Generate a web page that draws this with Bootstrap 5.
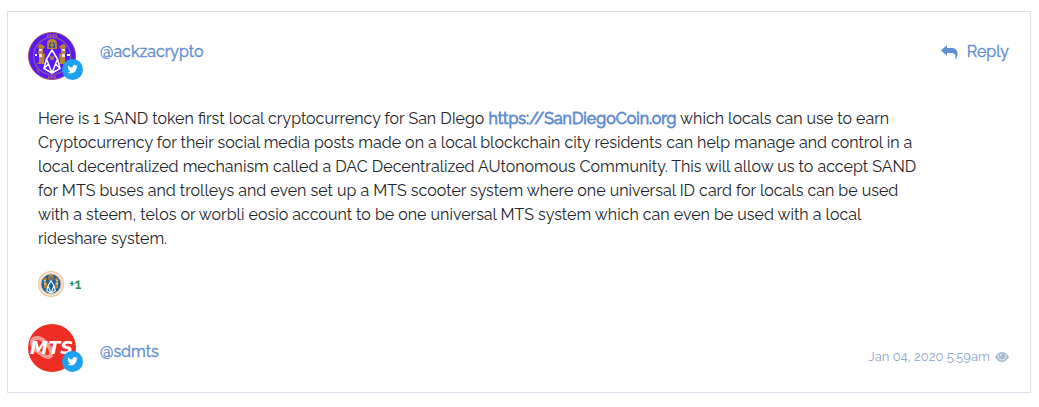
<!DOCTYPE html>
<html lang="en">
<head>
<meta charset="utf-8">
<meta name="viewport" content="width=device-width, initial-scale=1">
<title>Tip from @ackzacrypto</title>
<link href="https://cdn.jsdelivr.net/npm/bootstrap@5.3.0/dist/css/bootstrap.min.css" rel="stylesheet">
<style>
  body { font-family: Raleway, Lato, "Liberation Sans", sans-serif; font-size: 16px; line-height: 24px; color: #212529; }
  .page { padding: 11px 8px 14px 7px; }
  .tip { border: 1px solid #dae0ec; border-radius: 0; padding: 20px; }
  .tip a, .reply { color: #5f8dd3; text-decoration: none; font-weight: 400; -webkit-text-stroke: 0.4px #5f8dd3; }
  .tip a:hover, .reply:hover { text-decoration: underline; }
  .user { gap: 24px; }
  .avatar { width: 48px; height: 48px; }
  .avatar svg { display: block; }
  .avatar .net { right: -7px; bottom: 0; }
  .user a { padding-bottom: 8px; }
  .user.to a { padding: 8px 0 0; }
  .reply { gap: 9px; padding: 0 1px 8px; line-height: 24px; }
  .message { margin: 27px 90px 20px 10px; font-weight: 400; }
  .message a { -webkit-text-stroke-width: 0.8px; }
  .count { margin: 0 10px 27px; gap: 5px; font-size: 14px; font-weight: 600; color: #2e8b57; }
  .when { font-size: 13px; line-height: 20px; color: #8ea6c8; gap: 5px; padding-top: 18px; padding-right: 1px; }
</style>
</head>
<body>
<svg class="d-none" aria-hidden="true">
  <symbol id="bird" viewBox="0 0 24 24"><circle cx="12" cy="12" r="12" fill="#1da1f2"/><path transform="translate(6.200 5.800) scale(.49)" fill="#fff" d="M23.95 4.57a10 10 0 0 1-2.82.78 4.96 4.96 0 0 0 2.16-2.73c-.95.56-2 .96-3.13 1.19a4.92 4.92 0 0 0-8.38 4.48A13.96 13.96 0 0 1 1.67 3.15a4.93 4.93 0 0 0 1.52 6.57 4.9 4.9 0 0 1-2.23-.61v.06a4.92 4.92 0 0 0 3.95 4.83 5 5 0 0 1-2.21.08 4.94 4.94 0 0 0 4.6 3.42A9.87 9.87 0 0 1 0 19.54a13.99 13.99 0 0 0 7.55 2.21c9.05 0 14-7.5 14-13.98 0-.21 0-.42-.02-.63a9.94 9.94 0 0 0 2.42-2.57z"/></symbol>
  <g id="emblem">
    <path fill="#b98235" d="M19 17v-5q0-5 5-5t5 5v5zM10 14l2-2 3 1 2 2-2 2v4l2 1-1 8 2 2H9l2-2v-7l-1-3 1-2zM38 14l-2-2-3 1-2 2 2 2v4l-2 1 1 8-2 2h9l-2-2v-7l1-3-1-2z"/>
    <path fill="#32517c" d="M21 16v-3q0-3 3-3t3 3v3z"/>
    <path fill="none" stroke="#d9a14b" d="M22 13h4M24 10v6"/>
    <path fill="#fff" opacity=".85" d="M11 17h3v2h-3zM34 17h3v2h-3zM11 22h3v3h-3zM34 22h3v3h-3z"/>
  </g>
</svg>
<main class="page">
  <article class="card tip">
    <header class="d-flex justify-content-between align-items-center">
      <div class="user d-flex align-items-center">
        <div class="avatar position-relative">
          <svg width="48" height="48" viewBox="0 0 48 48" role="img" aria-label="ackzacrypto">
            <circle cx="24" cy="24" r="23.5" fill="#5a18f5" stroke="#95506c"/>
            <circle cx="24" cy="24" r="18.5" fill="none" stroke="#8655a0" stroke-width="1.4"/>
            <path stroke="#a5608e" stroke-width="3" stroke-dasharray="1 .5" d="M19 3.700h10M20 45h8"/>
            <path stroke="#9854a0" stroke-width="1.500" d="M9 37l2 4M39 37l-2 4"/>
            <use href="#emblem"/>
            <path fill="#fff" d="M7 22h2v2H7zM39 22h3v2h-3z"/>
            <path fill="#5a18f5" stroke="#fff" stroke-width="1.500" stroke-linejoin="round" d="M24 18l-5.500 9L16 36.500l8 4.500 8-4.500L29.500 27zM24 41l-5.500-14M24 41l5.500-14M16 36.500l4.500-4.500M32 36.500L27.500 32"/>
            <path fill="none" stroke="#a7765e" stroke-width="1.200" d="M22 24l1 4 1-4 1 4 1-4"/>
          </svg>
          <svg class="net position-absolute" width="21" height="21" role="img" aria-label="Twitter"><use href="#bird"/></svg>
        </div>
        <a href="#">@ackzacrypto</a>
      </div>
      <button type="button" class="reply border-0 bg-transparent d-flex align-items-center">
        <svg width="17" height="15" viewBox="0 0 17 15" aria-hidden="true"><path fill="#5f8dd3" d="M0 5.500L6 0v3h4c5 0 6.500 2.500 6.500 6 0 2-.5 3.700-1.500 5-.5.400-.7.200-.5-.5C15.300 9.500 13.500 8 10 8H6v3z"/></svg>
        Reply
      </button>
    </header>
    <p class="message">Here is 1 SAND token first local cryptocurrency for San DIego <a href="#">https://SanDiegoCoin.org</a> which locals can use to earn Cryptocurrency for their social media posts made on a local blockchain city residents can help manage and control in a local decentralized mechanism called a DAC Decentralized AUtonomous Community. This will allow us to accept SAND for MTS buses and trolleys and even set up a MTS scooter system where one universal ID card for locals can be used with a steem, telos or worbli eosio account to be one universal MTS system which can even be used with a local rideshare system.</p>
    <div class="count d-flex align-items-center">
      <svg width="26" height="26" viewBox="0 0 48 48" role="img" aria-label="SAND token">
        <circle cx="24" cy="24" r="23" fill="#f7e6d6" stroke="#e3c3a3" stroke-width="2"/>
        <circle cx="24" cy="24" r="18.500" fill="#17619f" stroke="#e7b98c" stroke-width="1.500"/>
        <use href="#emblem"/>
        <path fill="#17619f" stroke="#fff" stroke-width="2" d="M24 18l-5.500 9L16 36.500l8 4.500 8-4.500L29.500 27zM24 41l-5.500-14M24 41l5.500-14"/>
      </svg>
      +1
    </div>
    <footer class="d-flex justify-content-between align-items-center">
      <div class="user to d-flex align-items-center">
        <div class="avatar position-relative">
          <svg width="48" height="48" viewBox="0 0 48 48" role="img" aria-label="MTS">
            <circle cx="24" cy="24" r="24" fill="#ee2e24"/>
            <path fill="none" stroke="#f69a94" stroke-width="4" d="M17 18C12 12 4 13 4 19c0 6 7 9 11 12s9 3 8-3c0-4-3-7-6-10"/>
            <text x="2" y="30" font-family="DejaVu Sans, sans-serif" font-size="18" font-weight="700" font-style="italic" fill="#fff">MTS</text>
          </svg>
          <svg class="net position-absolute" width="21" height="21" role="img" aria-label="Twitter"><use href="#bird"/></svg>
        </div>
        <a href="#">@sdmts</a>
      </div>
      <div class="when d-flex align-items-center">
        <time datetime="2020-01-04T05:59">Jan 04, 2020 5:59am</time>
        <svg width="14" height="10" viewBox="0 0 14 10" aria-hidden="true"><path fill="#a9bdd2" d="M0 5q3-5 7-5t7 5q-3 5-7 5T0 5z"/><path fill="none" stroke="#fff" stroke-width=".8" d="M3.300 2.500a4 4 0 1 0 7.400 0M5.200 4Q5.200 2.200 7 2.200"/></svg>
      </div>
    </footer>
  </article>
</main>
<script src="https://cdn.jsdelivr.net/npm/bootstrap@5.3.0/dist/js/bootstrap.bundle.min.js"></script>
</body>
</html>
